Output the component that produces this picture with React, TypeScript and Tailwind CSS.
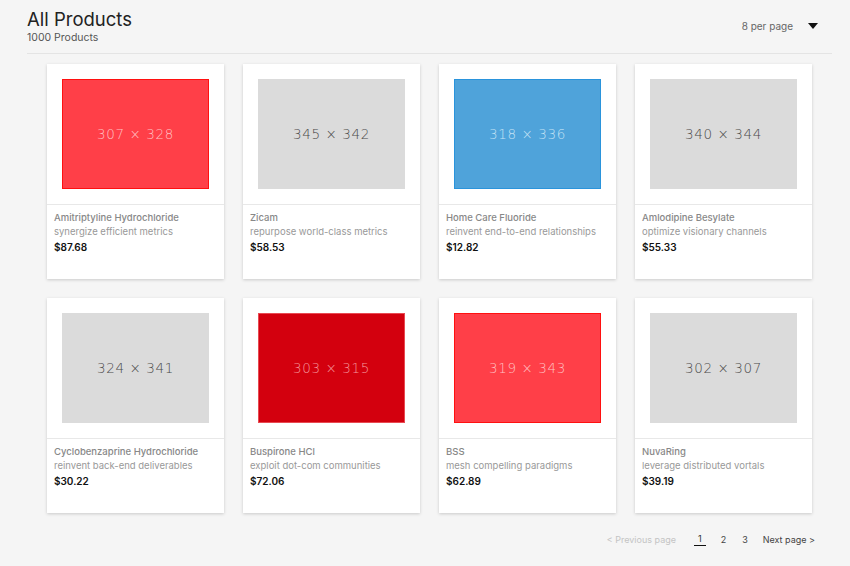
const products = [
  { name: 'Amitriptyline Hydrochloride', desc: 'synergize efficient metrics', price: '$87.68', size: '307 × 328', bg: 'bg-[#ff3f48]', border: 'border-[#ff1010]', text: 'text-[#ffc0c3]' },
  { name: 'Zicam', desc: 'repurpose world-class metrics', price: '$58.53', size: '345 × 342', bg: 'bg-[#dbdbdb]', border: 'border-[#dbdbdb]', text: 'text-[#4a4a4a]' },
  { name: 'Home Care Fluoride', desc: 'reinvent end-to-end relationships', price: '$12.82', size: '318 × 336', bg: 'bg-[#4fa3da]', border: 'border-[#2a94dc]', text: 'text-[#c4e2f5]' },
  { name: 'Amlodipine Besylate', desc: 'optimize visionary channels', price: '$55.33', size: '340 × 344', bg: 'bg-[#dbdbdb]', border: 'border-[#dbdbdb]', text: 'text-[#4a4a4a]' },
  { name: 'Cyclobenzaprine Hydrochloride', desc: 'reinvent back-end deliverables', price: '$30.22', size: '324 × 341', bg: 'bg-[#dbdbdb]', border: 'border-[#dbdbdb]', text: 'text-[#4a4a4a]' },
  { name: 'Buspirone HCl', desc: 'exploit dot-com communities', price: '$72.06', size: '303 × 315', bg: 'bg-[#d3000e]', border: 'border-[#e84a52]', text: 'text-[#f4959a]' },
  { name: 'BSS', desc: 'mesh compelling paradigms', price: '$62.89', size: '319 × 343', bg: 'bg-[#ff3f48]', border: 'border-[#ff1010]', text: 'text-[#ffc0c3]' },
  { name: 'NuvaRing', desc: 'leverage distributed vortals', price: '$39.19', size: '302 × 307', bg: 'bg-[#dbdbdb]', border: 'border-[#dbdbdb]', text: 'text-[#4a4a4a]' },
];

export default function App() {
  return (
    <div className="min-h-[566px] bg-[#f5f5f5] pl-[27px] pr-[18px] pt-[8px] font-['Inter',_sans-serif]">
      {/* Header */}
      <div className="flex items-start justify-between border-b border-[#e4e4e4] pb-[9px]">
        <div>
          <h1 className="text-[18.5px] leading-[23px] text-[#222]">All Products</h1>
          <p className="text-[10.5px] leading-[13px] text-[#555]">1000 Products</p>
        </div>
        <div className="mt-[11px] flex items-center">
          <span className="text-[10px] text-[#666]">8 per page</span>
          <svg className="ml-[15px] mr-[14px]" width="10" height="7" viewBox="0 0 10 7">
            <path d="M0 0 L10 0 L5 6 Z" fill="#111" />
          </svg>
        </div>
      </div>

      {/* Grid */}
      <div className="mt-[10px] grid grid-cols-4 gap-x-[19px] gap-y-[19px] px-[20px]">
        {products.map((p) => (
          <div key={p.name} className="h-[215px] bg-white shadow-[0_1px_3px_rgba(0,0,0,0.18)]">
            <div className="border-b border-[#e8e8e8] px-[15px] pb-[15px] pt-[15px]">
              <div className={`flex h-[110px] items-center justify-center border ${p.bg} ${p.border}`}>
                <span className={`font-['DejaVu_Sans',_sans-serif] text-[13.5px] font-light tracking-[0.6px] ${p.text}`}>{p.size}</span>
              </div>
            </div>
            <div className="px-[7px] pt-[6px]">
              <div className="text-[9.5px] font-medium leading-[13px] text-[#888]">{p.name}</div>
              <div className="text-[9.5px] leading-[15px] text-[#999]">{p.desc}</div>
              <div className="text-[10px] font-semibold leading-[16px] text-[#111]">{p.price}</div>
            </div>
          </div>
        ))}
      </div>

      {/* Pagination */}
      <div className="mt-[20px] flex items-center justify-end pr-[17px] text-[9px]">
        <span className="text-[#c4c4c4]">&lt; Previous page</span>
        <span className="ml-[18px] border-b border-[#111] px-[4px] leading-[12px] text-[#333]">1</span>
        <span className="ml-[15px] text-[#444]">2</span>
        <span className="ml-[16px] text-[#444]">3</span>
        <span className="ml-[15px] text-[#444]">Next page &gt;</span>
      </div>
    </div>
  );
}
